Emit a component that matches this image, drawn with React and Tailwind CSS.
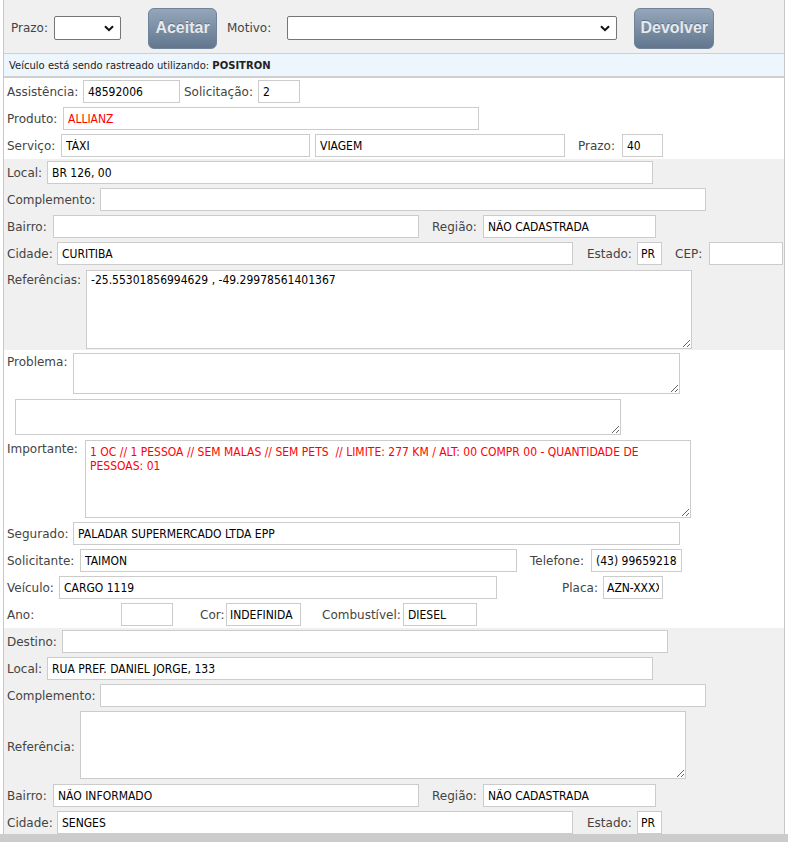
import React from 'react';

const lbl = "font-['DejaVu_Sans',Verdana,sans-serif] text-[12px] text-[#444] whitespace-nowrap shrink-0";
const inp = "h-[23px] border border-[#ccc] bg-white px-[4px] text-[12px] font-['DejaVu_Sans_Condensed','DejaVu_Sans',sans-serif] outline-none shrink-0";
const area = "border border-[#ccc] bg-white px-[4px] py-[2px] text-[12px] leading-[14px] font-['DejaVu_Sans_Condensed','DejaVu_Sans',sans-serif] outline-none shrink-0";

function Label({ w, children, className = '' }) {
    return <span className={`${lbl} ${w} ${className}`}>{children}</span>;
}

function Field({ w, value = '', red }) {
    return <input readOnly value={value} className={`${inp} ${w} ${red ? 'text-[#ff0000]' : 'text-black'}`} />;
}

function Row({ children, className = 'h-[27px] items-center' }) {
    return <div className={`flex pl-[3px] ${className}`}>{children}</div>;
}

function Chevron() {
    return (
        <svg width="10" height="7" viewBox="0 0 10 7" className="shrink-0">
            <path d="M1 1.2 L5 5.2 L9 1.2" fill="none" stroke="#111" strokeWidth="2" />
        </svg>
    );
}

function FakeSelect({ w }) {
    return (
        <div className={`${w} h-[24px] border border-[#767676] rounded-[2px] bg-white flex items-center justify-end pr-[6px]`}>
            <Chevron />
        </div>
    );
}

function Btn({ children, w }) {
    return (
        <button className={`${w} h-[41px] rounded-[6px] border border-[#6f839b] bg-gradient-to-b from-[#95a6b9] to-[#62778f] text-[#e6e9ee] font-bold text-[16px] font-['Liberation_Sans_Narrow','Liberation_Sans',Arial,sans-serif] [text-shadow:0_-1px_0_rgba(0,0,0,0.25)]`}>
            {children}
        </button>
    );
}

export default function App() {
    return (
        <div className="w-[788px] h-[842px] bg-white overflow-hidden">
            <div className="ml-[3px] w-[782px] border-l border-r border-[#c8c8c8] h-[834px] overflow-hidden">
                {/* top actions */}
                <div className="h-[54px] bg-[#f0f0f0] border-b border-[#cfcfcf] flex items-center pl-[7px] pt-[3px]">
                    <span className={lbl}>Prazo:</span>
                    <div className="ml-[6px]"><FakeSelect w="w-[67px]" /></div>
                    <div className="ml-[27px]"><Btn w="w-[69px]">Aceitar</Btn></div>
                    <span className={`${lbl} ml-[10px]`}>Motivo:</span>
                    <div className="ml-[16px]"><FakeSelect w="w-[330px]" /></div>
                    <div className="ml-[17px]"><Btn w="w-[80px]">Devolver</Btn></div>
                </div>
                <div className="h-[24px] bg-[#eef6fd] border-b-[2px] border-[#cfcfcf] flex items-center pl-[5px] text-[10px] text-[#222] font-['DejaVu_Sans',Verdana,sans-serif]">
                    Veículo está sendo rastreado utilizando:&nbsp;<b>POSITRON</b>
                </div>

                {/* atendimento */}
                <div>
                    <Row>
                        <Label w="w-[76px]">Assistência:</Label>
                        <Field w="w-[97px]" value="48592006" />
                        <Label w="w-[74px]" className="ml-[4px]">Solicitação:</Label>
                        <Field w="w-[42px]" value="2" />
                    </Row>
                    <Row>
                        <Label w="w-[56px]">Produto:</Label>
                        <Field w="w-[416px]" value="ALLIANZ" red />
                    </Row>
                    <Row>
                        <Label w="w-[54px]">Serviço:</Label>
                        <Field w="w-[249px]" value="TÁXI" />
                        <Field w="w-[250px] ml-[5px]" value="VIAGEM" />
                        <Label w="w-[44px]" className="ml-[13px]">Prazo:</Label>
                        <Field w="w-[41px]" value="40" />
                    </Row>
                </div>

                {/* local */}
                <div className="bg-[#f0f0f0]">
                    <Row>
                        <Label w="w-[40px]">Local:</Label>
                        <Field w="w-[606px]" value="BR 126, 00" />
                    </Row>
                    <Row>
                        <Label w="w-[93px]">Complemento:</Label>
                        <Field w="w-[606px]" />
                    </Row>
                    <Row>
                        <Label w="w-[46px]">Bairro:</Label>
                        <Field w="w-[366px]" />
                        <Label w="w-[51px]" className="ml-[13px]">Região:</Label>
                        <Field w="w-[173px]" value="NÃO CADASTRADA" />
                    </Row>
                    <Row>
                        <Label w="w-[50px]">Cidade:</Label>
                        <Field w="w-[516px]" value="CURITIBA" />
                        <Label w="w-[50px]" className="ml-[14px]">Estado:</Label>
                        <Field w="w-[25px] !px-[3px]" value="PR" />
                        <Label w="w-[34px]" className="ml-[13px]">CEP:</Label>
                        <Field w="w-[74px]" />
                    </Row>
                    <Row className="items-start pt-[3px] pb-[1px]">
                        <Label w="w-[79px]" className="pt-[1px]">Referências:</Label>
                        <textarea readOnly value="-25.55301856994629 , -49.29978561401367" className={`${area} w-[606px] h-[79px] text-black`} />
                    </Row>
                </div>

                {/* problema */}
                <Row className="items-start pt-[3px]">
                    <Label w="w-[66px]">Problema:</Label>
                    <textarea readOnly value="" className={`${area} w-[607px] h-[41px]`} />
                </Row>
                <Row className="items-start pt-[5px]">
                    <textarea readOnly value="" className={`${area} ml-[8px] w-[606px] h-[36px]`} />
                </Row>
                <Row className="items-start pt-[5px]">
                    <Label w="w-[78px]">Importante:</Label>
                    <textarea readOnly value="1 OC // 1 PESSOA // SEM MALAS // SEM PETS  // LIMITE: 277 KM / ALT: 00 COMPR 00 - QUANTIDADE DE PESSOAS: 01" className={`${area} w-[606px] h-[78px] text-[#ff0000] pt-[4px]`} />
                </Row>
                <Row className="h-[29px] items-center pt-[2px]">
                    <Label w="w-[66px]">Segurado:</Label>
                    <Field w="w-[607px]" value="PALADAR SUPERMERCADO LTDA EPP" />
                </Row>
                <Row>
                    <Label w="w-[73px]">Solicitante:</Label>
                    <Field w="w-[437px]" value="TAIMON" />
                    <Label w="w-[61px]" className="ml-[13px]">Telefone:</Label>
                    <Field w="w-[91px]" value="(43) 996592180" />
                </Row>
                <Row>
                    <Label w="w-[52px]">Veículo:</Label>
                    <Field w="w-[438px]" value="CARGO 1119" />
                    <Label w="w-[41px]" className="ml-[65px]">Placa:</Label>
                    <Field w="w-[60px] !px-[3px]" value="AZN-XXXX" />
                </Row>
                <Row>
                    <Label w="w-[114px]">Ano:</Label>
                    <Field w="w-[52px]" />
                    <Label w="w-[26px]" className="ml-[27px]">Cor:</Label>
                    <Field w="w-[75px] !px-[3px]" value="INDEFINIDA" />
                    <Label w="w-[81px]" className="ml-[21px]">Combustível:</Label>
                    <Field w="w-[74px]" value="DIESEL" />
                </Row>

                {/* destino */}
                <div className="bg-[#f0f0f0] h-[220px]">
                    <Row>
                        <Label w="w-[55px]">Destino:</Label>
                        <Field w="w-[606px]" />
                    </Row>
                    <Row>
                        <Label w="w-[40px]">Local:</Label>
                        <Field w="w-[606px]" value="RUA PREF. DANIEL JORGE, 133" />
                    </Row>
                    <Row>
                        <Label w="w-[93px]">Complemento:</Label>
                        <Field w="w-[606px]" />
                    </Row>
                    <Row className="h-[73px] items-center pt-[2px]">
                        <Label w="w-[73px]">Referência:</Label>
                        <textarea readOnly value="" className={`${area} w-[606px] h-[68px] self-start`} />
                    </Row>
                    <Row>
                        <Label w="w-[46px]">Bairro:</Label>
                        <Field w="w-[366px]" value="NÃO INFORMADO" />
                        <Label w="w-[51px]" className="ml-[13px]">Região:</Label>
                        <Field w="w-[173px]" value="NÃO CADASTRADA" />
                    </Row>
                    <Row>
                        <Label w="w-[50px]">Cidade:</Label>
                        <Field w="w-[516px]" value="SENGES" />
                        <Label w="w-[50px]" className="ml-[14px]">Estado:</Label>
                        <Field w="w-[25px] !px-[3px]" value="PR" />
                    </Row>
                </div>
            </div>
            <div className="h-[8px] bg-[#cccccc]" />
        </div>
    );
}
